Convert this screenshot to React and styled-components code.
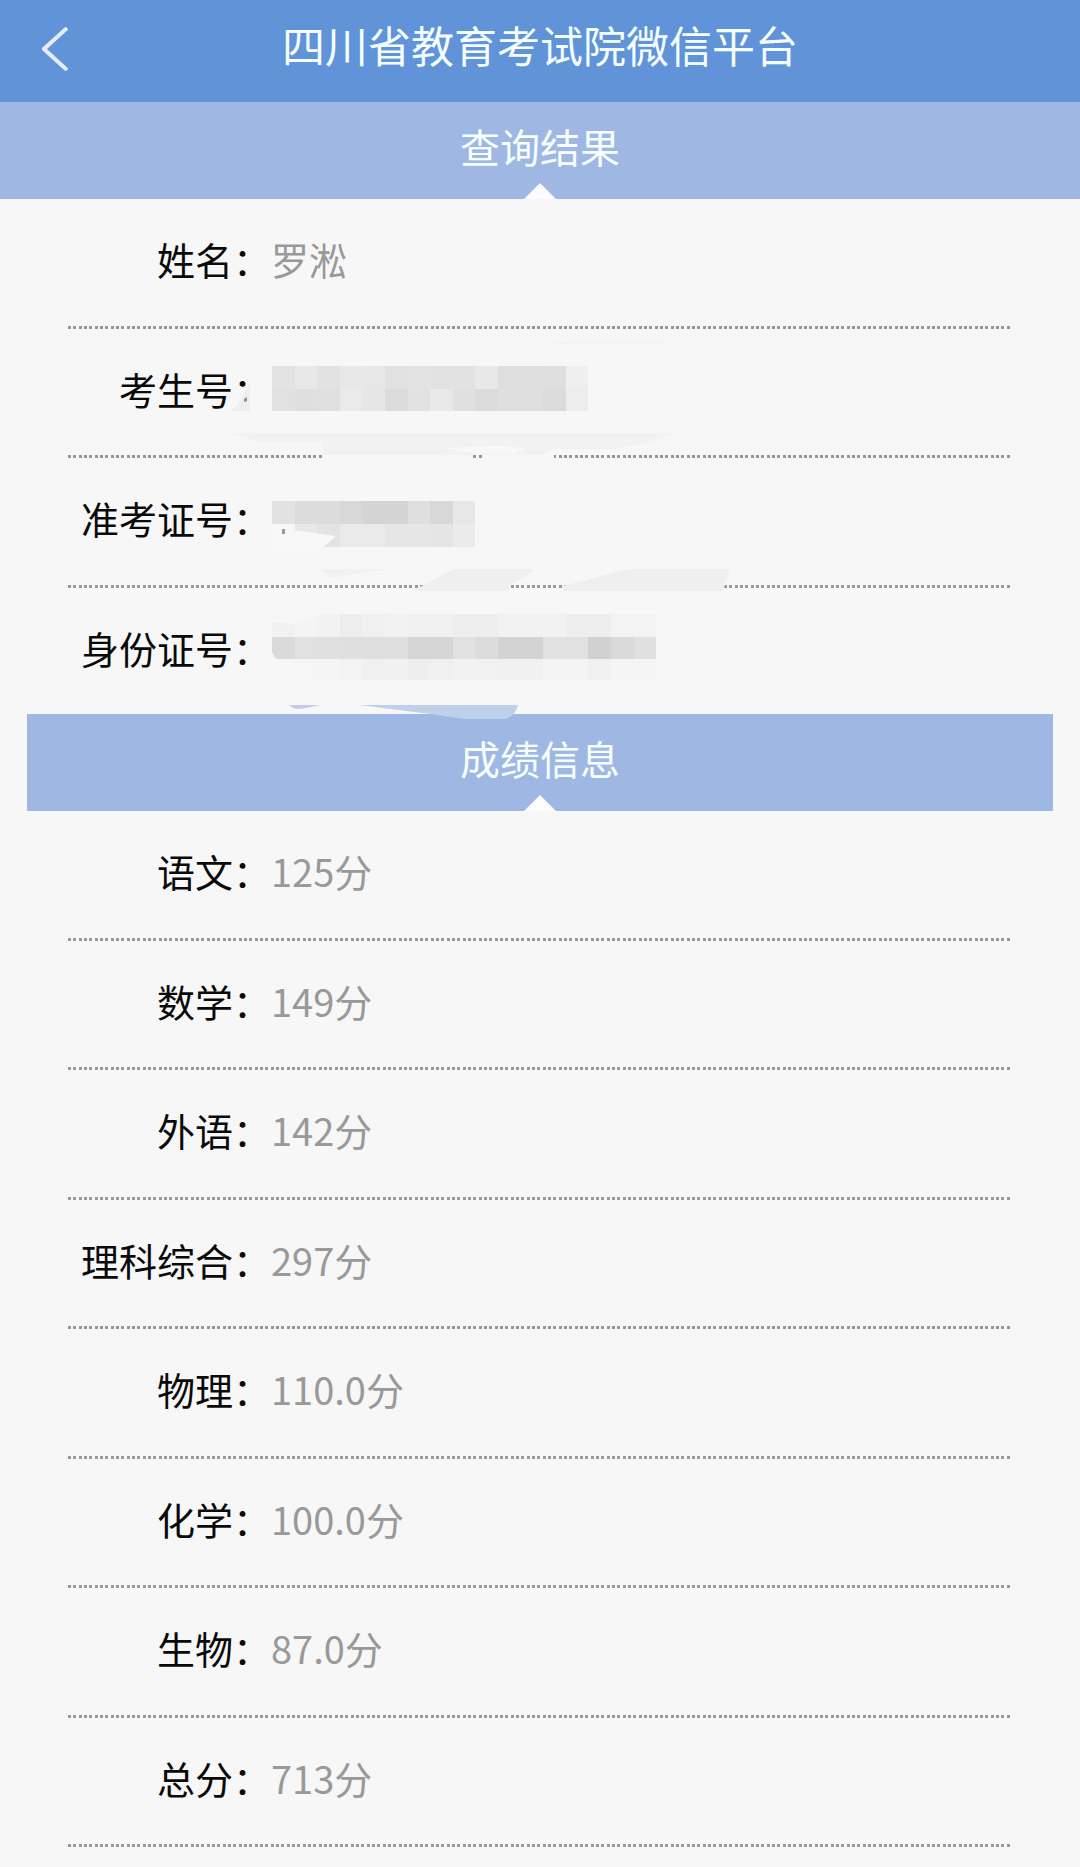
import React from 'react';
import styled, { createGlobalStyle } from 'styled-components';

const identity = [
    { label: '姓名', value: '罗淞' },
    { label: '考生号', mask: 'candidate' },
    { label: '准考证号', mask: 'ticket' },
    { label: '身份证号', mask: 'idCard' },
];

const scores = [
    { label: '语文', value: '125分' },
    { label: '数学', value: '149分' },
    { label: '外语', value: '142分' },
    { label: '理科综合', value: '297分' },
    { label: '物理', value: '110.0分' },
    { label: '化学', value: '100.0分' },
    { label: '生物', value: '87.0分' },
    { label: '总分', value: '713分' },
];

// Each mask is a strip of mosaic blocks: strip top/height and one grey per block
const masks = {
    candidate: {
        under: [
            { d: 'M163 82 L170 75 L182 54 V82 Z', fill: '#efefef' },
            { d: 'M176 70 L179 68 V72 L176 73 Z', fill: '#8c8c8c' },
            { d: 'M163 104 H609 L570 116 L545 120 H485 L475 126 H254 V113 H190 Z', fill: '#f2f2f2' },
            { d: 'M480 15 L500 12 H595 V15 Z', fill: '#f3f3f3' },
            { d: 'M254 126 H405 V130 H254 Z M415 126 H486 V130 H415 Z', fill: '#f7f7f7' },
            { d: 'M377 119 L430 117 L457 119 L445 125 H410 Z', fill: '#f8f8f8' },
        ],
        strips: [
            { y: 37, height: 23, fills: ['#e3e3e3', '#e8e8e8', '#e2e2e2', '#e8e8e8', '#e7e7e7', '#e1e1e1', '#e3e3e3', '#e2e2e2', '#e2e2e2', '#e8e8e8', '#dedede', '#dedede', '#dfdfdf', '#efefef'] },
            { y: 60, height: 22, fills: ['#e1e1e1', '#dfdfdf', '#e0e0e0', '#eaeaea', '#e6e6e6', '#dcdcdc', '#e2e2e2', '#e9e9e9', '#e0e0e0', '#dbdbdb', '#dfdfdf', '#dfdfdf', '#dbdbdb', '#ededed'] },
        ],
        over: [],
    },
    ticket: {
        under: [
            { d: 'M251 111 H320 L270 119 H262 Z', fill: '#f1f1f1' },
            { d: 'M346 133 L354 128 L386 111 H466 L458 118 L440 128 V133 Z', fill: '#efefef' },
            { d: 'M495 133 V128 L560 111 H662 L655 133 Z', fill: '#efefef' },
        ],
        strips: [
            { y: 43, height: 23, fills: ['#e2e2e2', '#dcdcdc', '#dcdcdc', '#d8d8d8', '#d4d4d4', '#d4d4d4', '#dfdfdf', '#d8d8d8', '#e7e7e7'] },
            { y: 66, height: 23, fills: ['#f7f7f7', '#e8e8e8', '#e3e3e3', '#eaeaea', '#eaeaea', '#e6e6e6', '#e6e6e6', '#e5e5e5', '#ebebeb'] },
        ],
        over: [
            { d: 'M204 66 L225 72 L268 78 L254 90 H204 Z', fill: '#f8f8f8' },
            { d: 'M214 71 H217 V76 H214 Z', fill: '#9a9a9a' },
        ],
    },
    idCard: {
        under: [
            { d: 'M221 117 H252 Q235 121 229 121 Q224 120 221 117 Z', fill: '#c3cbe6' },
            { d: 'M291 117 H450 Q446 131 434 131 H400 Q385 130 370 127 Z', fill: '#bfd0ea' },
        ],
        strips: [
            { y: 26, height: 23, fills: ['#f1f1f1', '#f4f4f4', '#f2f2f2', '#ededed', '#f0f0f0', '#f2f2f2', '#f0f0f0', '#f0f0f0', '#eeeeee', '#eeeeee', '#f2f2f2', '#f2f2f2', '#f2f2f2', '#eeeeee', '#eeeeee', '#f3f3f3', '#f3f3f3'] },
            { y: 49, height: 22, fills: ['#dadada', '#e1e1e1', '#e0e0e0', '#dfdfdf', '#dfdfdf', '#dedede', '#d6d6d6', '#d6d6d6', '#e1e1e1', '#dcdcdc', '#d3d3d3', '#d3d3d3', '#e1e1e1', '#e1e1e1', '#d1d1d1', '#dadada', '#e0e0e0'] },
            { y: 71, height: 21, fills: ['#f7f7f7', '#f6f6f6', '#f5f5f5', '#f3f3f3', '#f0f0f0', '#f1f1f1', '#eeeeee', '#f0f0f0', '#f2f2f2', '#f2f2f2', '#f1f1f1', '#f1f1f1', '#f4f4f4', '#f4f4f4', '#f0f0f0', '#f5f5f5', '#f5f5f5'] },
        ],
        over: [
            { d: 'M204 26 H254 L226 36 L204 34 Z', fill: '#f7f7f7' },
            { d: 'M204 63 Q205 70 212 73 L204 73 Z', fill: '#f7f7f7' },
        ],
    },
};

const BLOCK = 22.6;

const Mask = ({ name }) => {
    const { under, strips, over } = masks[name];

    return (
        <MaskArt viewBox="0 0 944 130" aria-hidden="true">
            {under.map((shape) => <path key={shape.d} d={shape.d} fill={shape.fill} />)}
            <g shapeRendering="crispEdges">
                {strips.map((strip) => strip.fills.map((fill, i) => (
                    <rect key={`${strip.y}-${i}`} x={204 + i * BLOCK} y={strip.y} width={BLOCK} height={strip.height} fill={fill} />
                )))}
            </g>
            {over.map((shape) => <path key={shape.d} d={shape.d} fill={shape.fill} />)}
        </MaskArt>
    );
};

const ResultList = ({ rows }) => (
    <List>
        {rows.map((row) => (
            <Row key={row.label} $open={row.mask === 'idCard'}>
                <dt>{row.label}：</dt>
                <dd>{row.mask ? <Mask name={row.mask} /> : row.value}</dd>
            </Row>
        ))}
    </List>
);

const App = () => {
    return (
        <>
            <GlobalStyle />
            <Header>
                <BackButton type="button" aria-label="返回">
                    <svg width="26" height="44" viewBox="0 0 26 44" fill="none">
                        <path d="M25 1 L2 22 L25 43" stroke="#e3edff" strokeWidth="4" />
                    </svg>
                </BackButton>
                <h1>四川省教育考试院微信平台</h1>
            </Header>
            <main>
                <Banner>查询结果</Banner>
                <ResultList rows={identity} />
                <Banner $inset>成绩信息</Banner>
                <ResultList rows={scores} />
            </main>
        </>
    );
};

export default App;

const GlobalStyle = createGlobalStyle`
    * {
        box-sizing: border-box;
    }
    body {
        margin: 0;
        background: #f7f7f7;
        font-family: 'Noto Sans CJK SC', sans-serif;
    }
    #root {
        padding-bottom: 20px;
    }
`;

const Header = styled.header`
    height: 102px;
    padding: 0 42px 14px;
    background: #6093d8;
    display: grid;
    grid-template-columns: 1fr auto 1fr;
    align-items: center;

    h1 {
        margin: 0;
        color: #f4feff;
        font-size: 43px;
        font-weight: 400;
        line-height: 60px;
    }
`;

const BackButton = styled.button`
    justify-self: start;
    padding: 10px 0 0;
    border: 0;
    background: none;
    cursor: pointer;

    svg {
        display: block;
    }
`;

const Banner = styled.h2`
    position: relative;
    height: 97px;
    margin: 0 ${(p) => (p.$inset ? '27px' : '0')};
    padding-bottom: 10px;
    background: #9eb8e3;
    color: #f6feff;
    display: flex;
    align-items: center;
    justify-content: center;
    font-size: 40px;
    font-weight: 400;
    line-height: 60px;

    &::after {
        content: '';
        position: absolute;
        bottom: 0;
        left: calc(50% - 16px);
        border: 16px solid transparent;
        border-top: 0;
        border-bottom-color: #fafcff;
    }
`;

const List = styled.dl`
    margin: 0 68px;
`;

// The dotted rule repeats every 16px, three dots at a time
const Row = styled.div`
    position: relative;
    height: ${(p) => (p.$open ? '126px' : '129px')};
    padding-bottom: ${(p) => (p.$open ? '6px' : '10px')};
    display: flex;
    align-items: center;
    font-size: 38px;
    line-height: 56px;
    background: ${(p) => (p.$open ? 'none' : `
        repeating-linear-gradient(
            to right,
            #999 0 3px, transparent 3px 5px,
            #999 5px 8px, transparent 8px 11px,
            #999 11px 14px, transparent 14px 16px
        ) bottom / 100% 3px no-repeat`)};

    &:nth-child(odd) {
        height: 130px;
    }
    dt {
        width: 203px;
        flex: none;
        color: #0a0a0a;
        text-align: right;
        white-space: nowrap;
    }
    dd {
        margin: 0;
        color: #999;
    }
`;

const MaskArt = styled.svg`
    position: absolute;
    top: 0;
    left: 0;
    z-index: 1;
    width: 944px;
    height: 130px;
    overflow: visible;
    pointer-events: none;
`;
